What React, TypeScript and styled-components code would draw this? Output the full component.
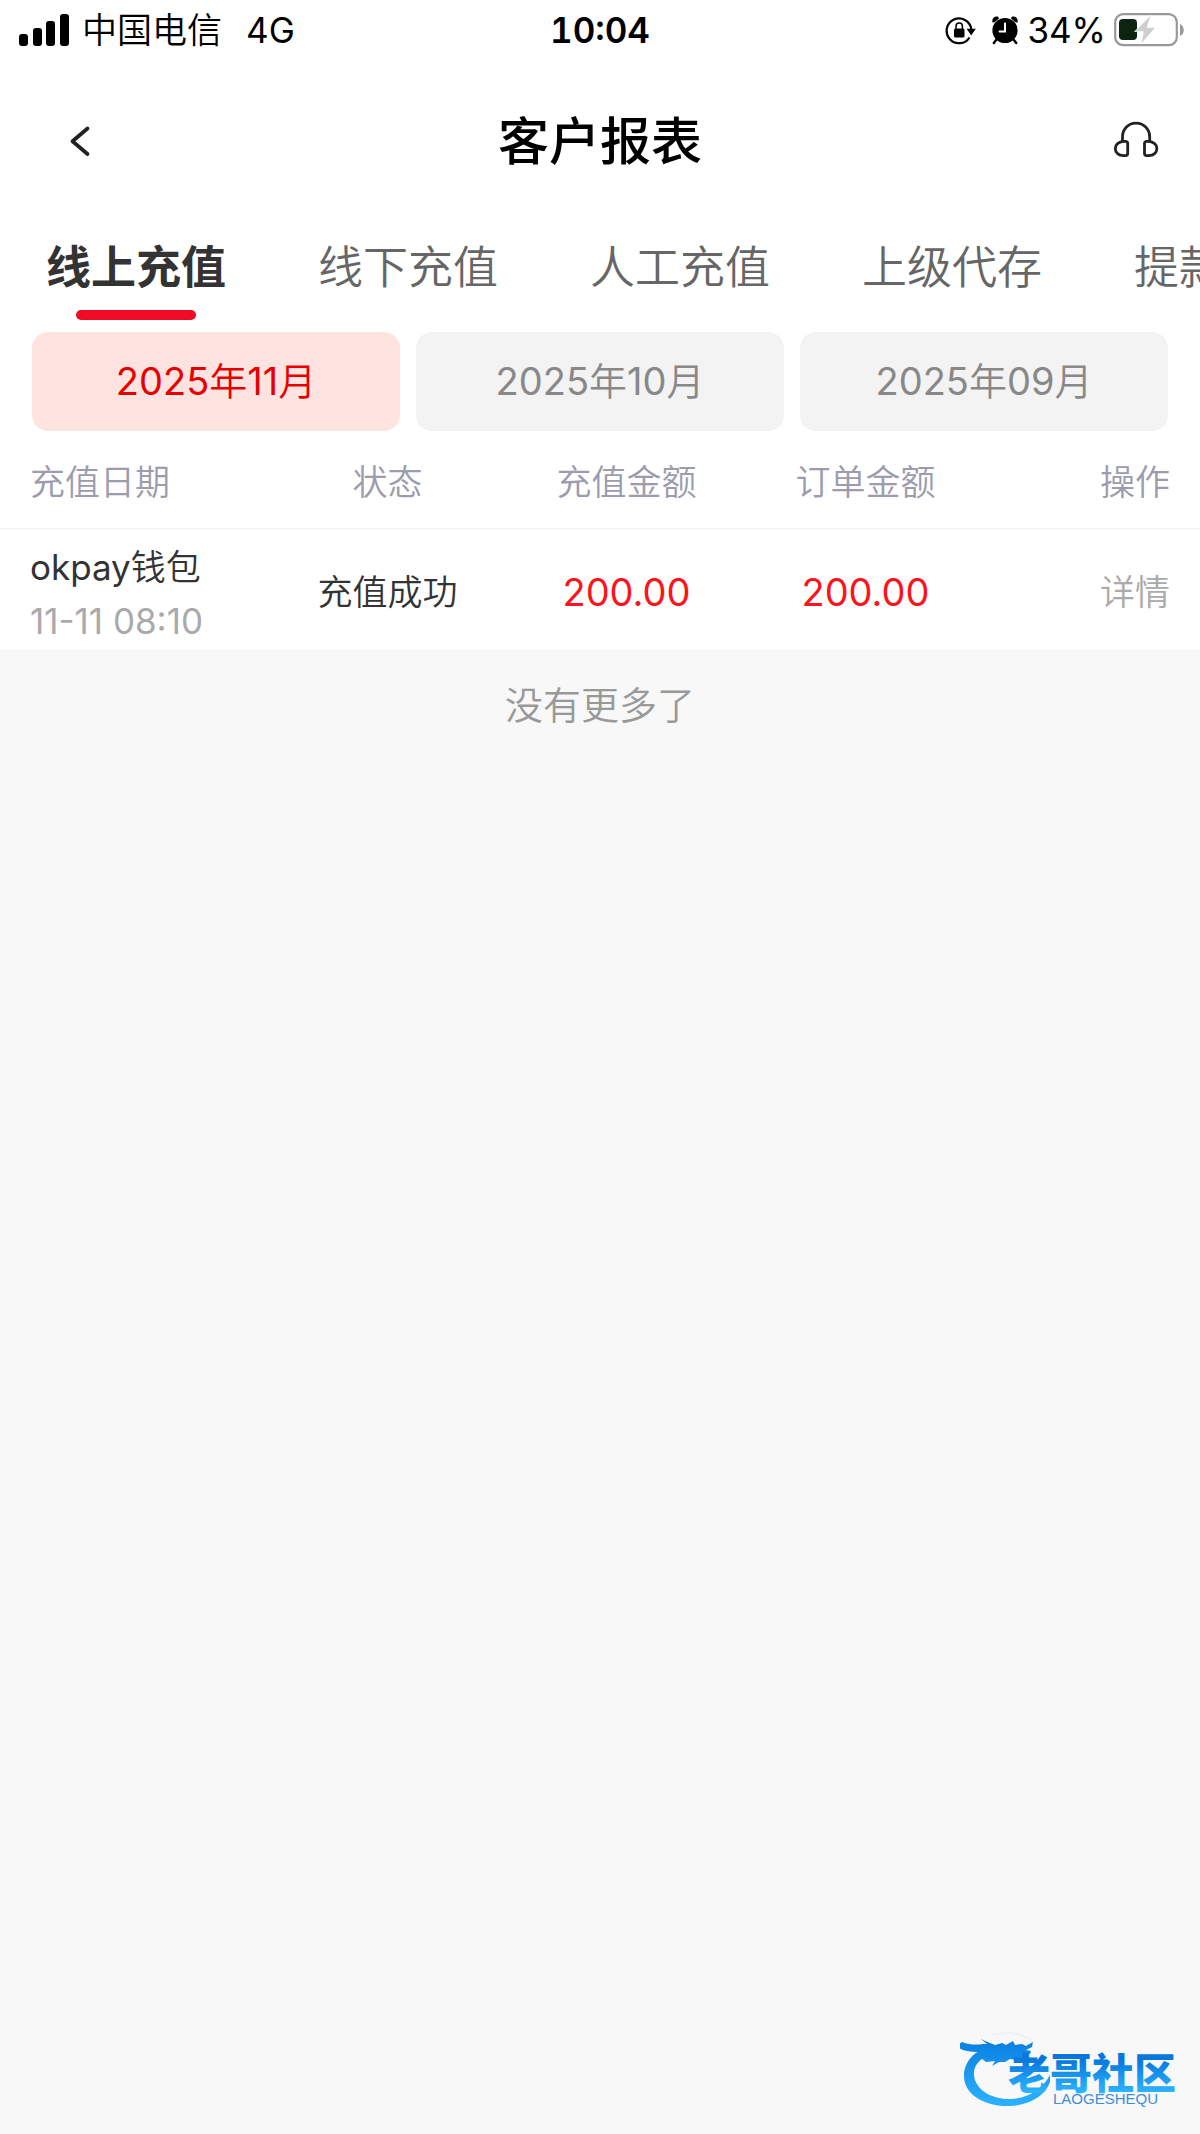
import React, { useState } from 'react';
import styled, { createGlobalStyle } from 'styled-components';

const heavyFont = "Inter, 'Noto Sans CJK SC', sans-serif";

const GlobalStyle = createGlobalStyle`
  *, *::before, *::after { box-sizing: border-box; }
  body {
    margin: 0;
    background: #f8f8f8;
    color: #333;
    font-family: Inter, 'Noto Sans CJK SC DemiLight', 'Noto Sans CJK SC', sans-serif;
    font-size: 35px;
    font-weight: 400;
    line-height: 54px;
  }
  button {
    margin: 0;
    padding: 0;
    border: 0;
    background: none;
    font: inherit;
    color: inherit;
    cursor: pointer;
  }
  svg { display: block; flex: none; }
`;

const Page = styled.div`
  display: flex;
  flex-direction: column;
  min-height: 100vh;
`;

const Panel = styled.div`
  background: #fff;
`;

const StatusBar = styled.div`
  display: grid;
  grid-template-columns: 1fr auto 1fr;
  align-items: center;
  height: 60px;
  padding: 0 16px;
  color: #000;
`;

const StatusGroup = styled.div<{ $end?: boolean }>`
  display: flex;
  align-items: center;
  justify-content: ${(p) => (p.$end ? 'flex-end' : 'flex-start')};
  gap: ${(p) => (p.$end ? '8px' : '12px')};
`;

const Network = styled.span`
  margin-left: 12px;
`;

const StatusIcons = styled.span`
  display: flex;
  gap: 14px;
`;

const Clock = styled.time`
  font-variant-numeric: tabular-nums;
  font-weight: 600;
`;

const Header = styled.header`
  display: grid;
  grid-template-columns: 1fr auto 1fr;
  align-items: center;
  height: 160px;
  padding: 0 38px;
`;

const Title = styled.h1`
  margin: 0;
  padding-top: 4px;
  color: #000;
  font-family: ${heavyFont};
  font-size: 51px;
  font-weight: 500;
  line-height: 72px;
`;

const IconButton = styled.button<{ $end?: boolean }>`
  display: flex;
  align-items: center;
  justify-content: ${(p) => (p.$end ? 'flex-end' : 'center')};
  justify-self: ${(p) => (p.$end ? 'end' : 'start')};
  width: 84px;
  height: 60px;
  color: #222;
`;

const Tabs = styled.nav`
  display: flex;
  overflow: hidden;
  height: 112px;
`;

const Tab = styled.button<{ $active: boolean }>`
  display: flex;
  flex: none;
  flex-direction: column;
  align-items: center;
  gap: 10px;
  padding: 16px 46px 0;
  color: ${(p) => (p.$active ? '#333' : '#666')};
  font-family: ${(p) => (p.$active ? heavyFont : 'inherit')};
  font-size: 45px;
  font-weight: ${(p) => (p.$active ? 700 : 400)};
  line-height: 64px;
  white-space: nowrap;

  &::after {
    content: '';
    display: ${(p) => (p.$active ? 'block' : 'none')};
    width: 120px;
    height: 10px;
    border-radius: 5px;
    background: #f00a23;
  }
`;

const Months = styled.div`
  display: grid;
  grid-template-columns: repeat(3, 1fr);
  gap: 16px;
  padding: 0 32px;
`;

const Month = styled.button<{ $active: boolean }>`
  height: 99px;
  padding-bottom: 2px;
  border-radius: 16px;
  background: ${(p) => (p.$active ? '#fee3e0' : '#f3f3f3')};
  color: ${(p) => (p.$active ? '#e60000' : '#888')};
  font-size: 38px;
`;

const Records = styled.table`
  width: 100%;
  table-layout: fixed;
  border-collapse: collapse;
`;

const HeadCell = styled.th<{ $side?: 'left' | 'right' }>`
  height: 98px;
  padding-top: 4px;
  padding-bottom: 0;
  padding-left: ${(p) => (p.$side === 'left' ? '30px' : '0')};
  padding-right: ${(p) => (p.$side === 'right' ? '30px' : '0')};
  border-bottom: 2px solid #f6f6f6;
  color: #9c9cae;
  font-weight: 400;
  text-align: ${(p) => p.$side ?? 'center'};
`;

const Cell = styled.td<{ $side?: 'left' | 'right' }>`
  height: 121px;
  padding-top: ${(p) => (p.$side === 'left' ? '8px' : '4px')};
  padding-bottom: 0;
  padding-left: ${(p) => (p.$side === 'left' ? '30px' : '0')};
  padding-right: ${(p) => (p.$side === 'right' ? '30px' : '0')};
  text-align: ${(p) => p.$side ?? 'center'};
  white-space: nowrap;
`;

const FirstCol = styled.col`
  width: 268px;
`;

const LastCol = styled.col`
  width: 215px;
`;

const When = styled.div`
  color: #aaa;
  font-kerning: none;
`;

const Amount = styled.span`
  color: #fa1420;
  font-size: 38px;
`;

const Detail = styled.a`
  color: #aaa;
  text-decoration: none;
`;

const EndNote = styled.p`
  margin: 0;
  padding: 28px 0;
  color: #999;
  font-size: 38px;
  text-align: center;
`;

const Footer = styled.footer`
  display: flex;
  justify-content: flex-end;
  margin-top: auto;
  padding: 0 16px 26px;
`;

const SignalIcon = () => (
  <svg width="54" height="32" viewBox="-3 0 54 32" fill="currentColor" aria-hidden="true">
    <rect x="0" y="20" width="9" height="12" rx="3" />
    <rect x="14" y="14" width="9" height="18" rx="3" />
    <rect x="27" y="7" width="9" height="25" rx="3" />
    <rect x="41" y="0" width="9" height="32" rx="3" />
  </svg>
);

const RotationLockIcon = () => (
  <svg width="32" height="30" viewBox="0 0 32 30" fill="none" aria-hidden="true">
    <path d="M24.5 22.5A12.4 12.4 0 1 1 26.3 14" stroke="#000" strokeWidth="2.2" />
    <path d="M21.6 13.8h9.2l-4.6 6.8z" fill="#000" />
    <rect x="9" y="13.5" width="10.5" height="9" rx="1.5" fill="#000" />
    <path d="M11 14v-2.800a3.2 3.2 0 0 1 6.4 0V14" stroke="#000" strokeWidth="1.5" />
  </svg>
);

const AlarmIcon = () => (
  <svg width="28" height="30" viewBox="0 0 28 30" aria-hidden="true">
    <circle cx="14" cy="15.5" r="12.6" />
    <path d="M1.6 7.6C.2 4.2 3.3.7 7.2 1.8l.8 1.6-4.9 4.2zM26.4 7.6c1.4-3.4-1.7-6.9-5.6-5.8l-.8 1.6 4.9 4.2z" />
    <path d="M5.5 24.5 2.8 28M22.5 24.5l2.7 3.5" stroke="#000" strokeWidth="2.4" strokeLinecap="round" />
    <path d="M14 8.5v8H8.500" fill="none" stroke="#fff" strokeWidth="2" strokeLinecap="round" />
  </svg>
);

const BatteryIcon = () => (
  <svg width="70" height="34" viewBox="0 0 70 34" aria-hidden="true">
    <rect x="1.2" y="1.2" width="61.6" height="31" rx="8" fill="#fff" stroke="#999" strokeWidth="2.2" />
    <rect x="5" y="6" width="18" height="21" rx="4" fill="#0c2410" />
    <path d="M37 2 20.5 18.5h9L27 31l14.5-16.5H33z" fill="#cfcfcf" stroke="#fff" strokeWidth="0.6" />
    <path d="M66 11c5 2 5 10 0 12z" fill="#999" />
  </svg>
);

const BackIcon = () => (
  <svg width="40" height="40" viewBox="0 0 40 40" fill="none" aria-hidden="true">
    <path d="M27.5 8.500 12.500 21.300 27.500 34" stroke="currentColor" strokeWidth="3.8" strokeLinecap="round" strokeLinejoin="round" />
  </svg>
);

const HeadsetIcon = () => (
  <svg width="50" height="40" viewBox="0 0 50 40" fill="none" stroke="currentColor" strokeWidth="2.8" strokeLinejoin="round" aria-hidden="true">
    <path d="M10.5 21.5V17C10.5 9 16.5 3.2 24 3.2S37.7 9 37.7 17v4.500" />
    <path d="M12.5 21.3h.8c1.6 0 2.400.8 2.400 2.200v9.800c0 1.600-.8 2.400-2.200 2.400h-2C6.600 35.700 3.300 32.500 3.300 28.500s3.700-7.200 9.200-7.200z" />
    <path d="M35.700 21.300h-.8c-1.600 0-2.400.8-2.400 2.200v9.800c0 1.600.8 2.400 2.200 2.400h2c4.900 0 8.200-3.200 8.200-7.200s-3.700-7.200-9.200-7.200z" />
  </svg>
);

const CommunityLogo = () => (
  <svg width="224" height="78" viewBox="0 0 224 78" role="img" aria-label="老哥社区">
    <defs>
      <linearGradient id="ring" x1="0" y1="10" x2="0" y2="76" gradientUnits="userSpaceOnUse">
        <stop offset="0" stopColor="#0a7fe0" />
        <stop offset="1" stopColor="#2bb2ff" />
      </linearGradient>
      <linearGradient id="word" x1="0" y1="30" x2="0" y2="62" gradientUnits="userSpaceOnUse">
        <stop offset="0" stopColor="#0878dc" />
        <stop offset="1" stopColor="#2bb4ff" />
      </linearGradient>
    </defs>
    <path
      fill="url(#ring)"
      d="M32 16C14 20 4 32 4 46c0 18 20 31 46 30 20-1 35-10 40-24l0-7c-8 15-22 23-39 24C33 70 15 60 14 45c-1-11 8-19 24-23z"
    />
    <path
      fill="url(#ring)"
      d="M2 12c7 3 15 3 21 2l4 0-6-5c6 3 10 4 14 6l7-2 4 2 7-4 2 4 7-1 4 2 7-4-1 5-6 3 5 1-1 3-6 0 3 3-6 1-4 2-7-1-5 3-6 0-7 4 3-5-9 1-5-4-8 2 8-8c-8 0-19 0-24-6z"
    />
    <path d="M33 5c12-4 27-2 40 7M43 3c12-1 23 2 29 7" fill="none" stroke="#e6f0f8" strokeWidth="1" />
    <text x="48" y="59" fontFamily="'Noto Sans CJK SC', sans-serif" fontSize="42" fontWeight="900" fill="url(#word)">
      老哥社区
    </text>
    <text x="93" y="74" fontFamily="'Liberation Sans', sans-serif" fontSize="15" fontWeight="400" fill="#3d8fd8">
      LAOGESHEQU
    </text>
  </svg>
);

const tabs = ['线上充值', '线下充值', '人工充值', '上级代存', '提款'];
const months = ['2025年11月', '2025年10月', '2025年09月'];
const records = [
  { channel: 'okpay钱包', time: '11-11 08:10', status: '充值成功', paid: '200.00', order: '200.00' },
];

export default function App() {
  const [tab, setTab] = useState(0);
  const [month, setMonth] = useState(0);

  return (
    <Page>
      <GlobalStyle />
      <Panel>
        <StatusBar>
          <StatusGroup>
            <SignalIcon />
            <span>中国电信</span>
            <Network>4G</Network>
          </StatusGroup>
          <Clock>10:04</Clock>
          <StatusGroup $end>
            <StatusIcons>
              <RotationLockIcon />
              <AlarmIcon />
            </StatusIcons>
            <span>34%</span>
            <BatteryIcon />
          </StatusGroup>
        </StatusBar>

        <Header>
          <IconButton aria-label="返回">
            <BackIcon />
          </IconButton>
          <Title>客户报表</Title>
          <IconButton $end aria-label="客服">
            <HeadsetIcon />
          </IconButton>
        </Header>

        <Tabs>
          {tabs.map((name, i) => (
            <Tab key={name} $active={i === tab} onClick={() => setTab(i)}>
              {name}
            </Tab>
          ))}
        </Tabs>

        <Months>
          {months.map((name, i) => (
            <Month key={name} $active={i === month} onClick={() => setMonth(i)}>
              {name}
            </Month>
          ))}
        </Months>

        <Records>
          <colgroup>
            <FirstCol />
            <col />
            <col />
            <col />
            <LastCol />
          </colgroup>
          <thead>
            <tr>
              <HeadCell $side="left">充值日期</HeadCell>
              <HeadCell>状态</HeadCell>
              <HeadCell>充值金额</HeadCell>
              <HeadCell>订单金额</HeadCell>
              <HeadCell $side="right">操作</HeadCell>
            </tr>
          </thead>
          <tbody>
            {records.map((r) => (
              <tr key={r.time}>
                <Cell $side="left">
                  <div>{r.channel}</div>
                  <When>{r.time}</When>
                </Cell>
                <Cell>{r.status}</Cell>
                <Cell>
                  <Amount>{r.paid}</Amount>
                </Cell>
                <Cell>
                  <Amount>{r.order}</Amount>
                </Cell>
                <Cell $side="right">
                  <Detail href="#detail">详情</Detail>
                </Cell>
              </tr>
            ))}
          </tbody>
        </Records>
      </Panel>

      <EndNote>没有更多了</EndNote>

      <Footer>
        <CommunityLogo />
      </Footer>
    </Page>
  );
}
